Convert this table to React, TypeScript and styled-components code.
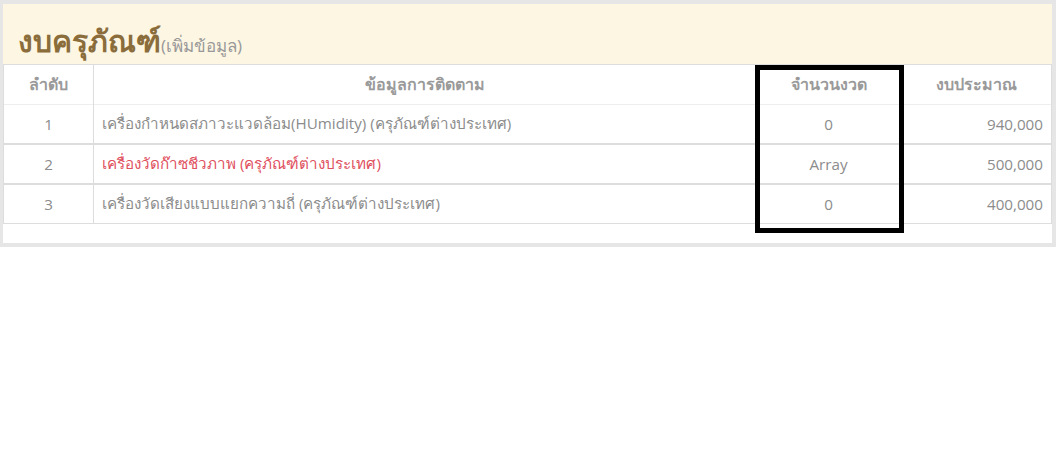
import styled, { createGlobalStyle } from 'styled-components'

const GlobalStyle = createGlobalStyle`
    body {
        margin: 0;
        background: #fff;
        font-family: "Open Sans", "Noto Sans", sans-serif;
    }
`;

const rows = [
    { no: 1, name: 'เครื่องกำหนดสภาวะแวดล้อม(HUmidity) (ครุภัณฑ์ต่างประเทศ)', terms: '0', budget: '940,000', alert: false },
    { no: 2, name: 'เครื่องวัดก๊าซชีวภาพ (ครุภัณฑ์ต่างประเทศ)', terms: 'Array', budget: '500,000', alert: true },
    { no: 3, name: 'เครื่องวัดเสียงแบบแยกความถี่ (ครุภัณฑ์ต่างประเทศ)', terms: '0', budget: '400,000', alert: false },
];

export default () => {
    return (
        <>
            <GlobalStyle />
            <Panel>
                <Heading>
                    <h2>งบครุภัณฑ์</h2>
                    <small>(เพิ่มข้อมูล)</small>
                </Heading>
                <Table>
                    <colgroup>
                        <col style={{ width: 90 }} />
                        <col />
                        <col style={{ width: 144 }} />
                        <col style={{ width: 151 }} />
                    </colgroup>
                    <thead>
                        <tr>
                            <Th>ลำดับ</Th>
                            <Th>ข้อมูลการติดตาม</Th>
                            <Th>จำนวนงวด</Th>
                            <Th>งบประมาณ</Th>
                        </tr>
                    </thead>
                    <tbody>
                        {rows.map(r => (
                            <tr key={r.no}>
                                <Td $align="center">{r.no}</Td>
                                <Td $alert={r.alert}>{r.name}</Td>
                                <Td $align="center">{r.terms}</Td>
                                <Td $align="right">{r.budget}</Td>
                            </tr>
                        ))}
                    </tbody>
                </Table>
                <Footer />
                <Marker />
            </Panel>
        </>
    );
}

const Panel = styled.div`
    position: relative;
    box-sizing: border-box;
    width: 1056px;
    border: 4px solid #e6e6e6;
    border-left-width: 3px;
    background: #fff;
`;

const Heading = styled.div`
    display: flex;
    align-items: baseline;
    height: 61px;
    padding: 0 15px;
    background: #fdf6e3;
    border-bottom: 1px solid #dddddd;
    box-sizing: border-box;

    h2 {
        margin: 0;
        padding-top: 16px;
        font-size: 30px;
        font-weight: 700;
        color: #8a6d3b;
        line-height: 42px;
    }

    small {
        font-size: 17px;
        color: #999;
    }
`;

const Table = styled.table`
    width: 100%;
    border-collapse: collapse;
    table-layout: fixed;
    font-size: 15.2px;

    tbody tr {
        border-top: 2px solid #dddddd;
    }
    tbody tr:first-child {
        border-top: 1px solid #eeeeee;
    }
    tbody tr:last-child {
        border-bottom: 1px solid #dddddd;
    }
`;

const Th = styled.th`
    height: 39px;
    padding: 0 8px;
    text-align: center;
    font-size: 16px;
    font-weight: 700;
    color: #9a9a9a;
    border-left: 1px solid #dddddd;
    border-right: 1px solid #dddddd;
`;

const Td = styled.td<{ $align?: string; $alert?: boolean }>`
    height: 38px;
    padding: 0 8px;
    text-align: ${p => p.$align || 'left'};
    color: ${p => (p.$alert ? '#e0505e' : '#8c8c8c')};
    border-left: 1px solid #dddddd;
    border-right: 1px solid #dddddd;
`;

const Footer = styled.div`
    height: 19px;
`;

const Marker = styled.div`
    position: absolute;
    left: 752px;
    top: 61px;
    width: 149px;
    height: 168px;
    border: 5px solid #000;
    box-sizing: border-box;
`;
